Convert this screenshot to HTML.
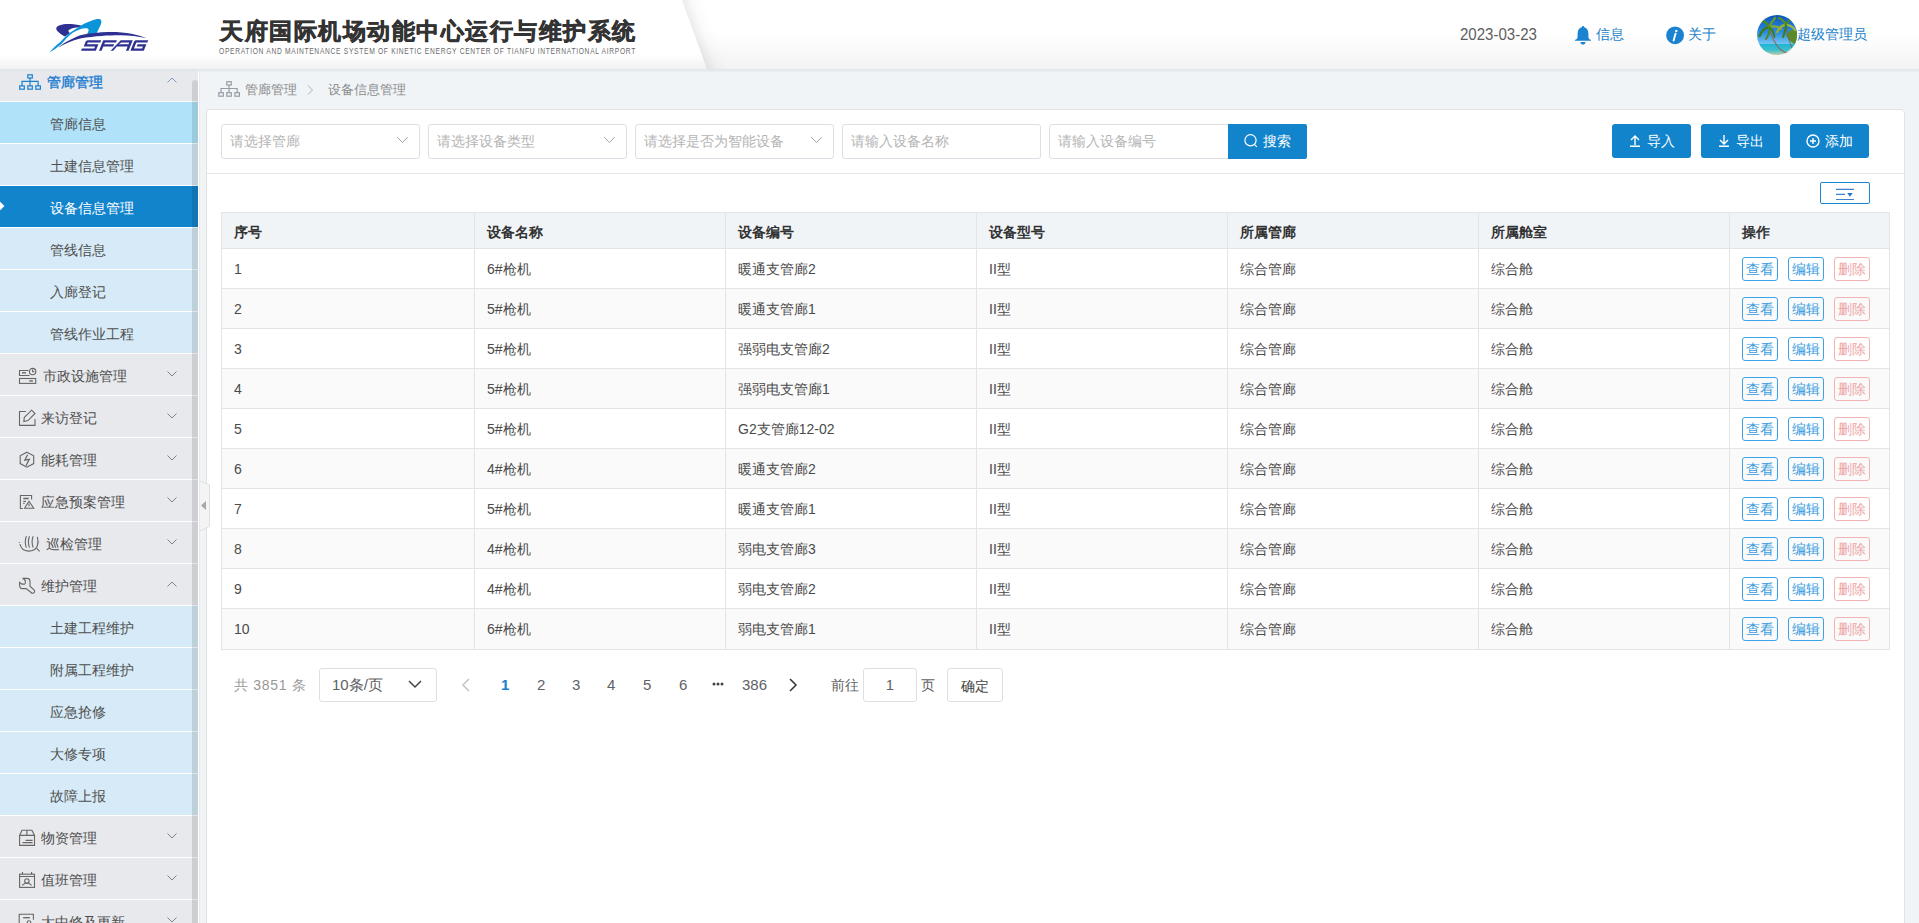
<!DOCTYPE html><html><head><meta charset="utf-8"><title>设备信息管理</title><style>
*{box-sizing:border-box;margin:0;padding:0}
html,body{width:1919px;height:923px;overflow:hidden;background:#f0f4f7;font-family:"Liberation Sans",sans-serif;font-size:14px;color:#606266}
.abs{position:absolute}
.t{position:absolute;white-space:nowrap;line-height:20px}
#hdr{position:absolute;left:0;top:0;width:1919px;height:69px;background:linear-gradient(#fff 0,#fff 33px,#f3f3f3 69px);z-index:5}
#hdrl{position:absolute;left:0;top:0;width:707px;height:69px;background:linear-gradient(#fff 0,#fff 54px,#f2f2f2 69px);clip-path:polygon(0 0,682px 0,707px 69px,0 69px)}
#hshadow{position:absolute;left:0;top:69px;width:1919px;height:4px;background:linear-gradient(#e0e4e9,rgba(240,244,247,0));z-index:4}
#side{position:absolute;left:0;top:60px;width:198px;height:864px;background:#e8e9ed;overflow:hidden}
.mi{position:absolute;left:0;width:198px;height:41px}
.mi.p{background:#e8e9ed}
.mi.s{background:#d6ebf7}
.mi.h{background:#b0e3f9}
.mi.a{background:#1184cc}
.sep{position:absolute;left:0;width:198px;height:1px;background:#fff}
.mt{position:absolute;top:10px;line-height:20px;white-space:nowrap;font-size:14px;color:#4e4e4e}
.mi.a .mt{color:#fff}
.chev{position:absolute;left:167px;width:10px;height:6px}
#sb{position:absolute;left:192px;top:20px;width:6px;height:843px;background:rgba(0,0,0,0.11);border-radius:3px 3px 0 0;z-index:2}
#vline{position:absolute;left:198px;top:69px;width:1px;height:854px;background:#fff;box-shadow:1px 0 0 #e8eaed}
#card{position:absolute;left:206px;top:109px;width:1699px;height:830px;background:#fff;border:1px solid #e2e2e3;border-radius:4px}
.inp{position:absolute;top:124px;height:35px;border:1px solid #dcdfe6;border-radius:3px;background:#fff}
.ph{position:absolute;left:8px;top:6px;line-height:20px;color:#b5b5b5;font-size:14px;white-space:nowrap}
.btn{position:absolute;top:124px;height:34px;background:#1184cc;border-radius:3px;color:#fff}
.tbl{position:absolute;left:221px;top:212px;width:1669px;height:438px;border:1px solid #e4e4e4}
.hl{position:absolute;height:1px;background:#e4e4e4}
.vl{position:absolute;width:1px;background:#e4e4e4}
.cell{position:absolute;line-height:20px;white-space:nowrap;color:#4a4a4a;font-size:14px}
.th{font-weight:bold;color:#333}
.ob{position:absolute;width:36px;height:24px;border:1px solid #3ba3e6;border-radius:3px;color:#3a9be0;font-size:14px;line-height:23px;text-align:center}
.ob.r{border-color:#f3b3b3;color:#efa3a3}
.pg{position:absolute;line-height:20px;white-space:nowrap;color:#606266;font-size:15px}
</style></head><body>
<div id="hdr"><div id="hdrl"></div>
<div class="abs" style="left:682px;top:0;width:22px;height:69px;background:linear-gradient(90deg,rgba(0,0,0,0.075),rgba(0,0,0,0.02) 45%,rgba(0,0,0,0));transform:skewX(19.9deg);transform-origin:0 0"></div>
<svg class="abs" style="left:0;top:0" width="160" height="60" viewBox="0 0 160 60">
<path d="M56.2,28.3 C56.5,25.5 62,23.9 68,23.9 C73,23.9 77.5,24.4 82,25.8 L80,27.2 C75,27.3 71,28.3 68.5,30.3 C68.2,31 69,32.5 70,33 L65,36.5 C61,34.5 56,31 56.2,28.3 Z" fill="#2e3192"/>
<path d="M49.6,52.1 C53,48.5 57,44.5 60.5,41.8 C63,39 66,36 68.9,33.5 C73,30.5 77,28 80.2,25.9 C86,22.7 92,20.2 96,19.3 C98.5,18.8 100.5,18.8 101.1,20.2 C101.7,21.8 101.2,23.5 100.5,25.2 L97.1,32.3 C96.8,33 96.5,33.4 96,33.5 L87.2,34.3 C87.8,32.5 88.6,31 88.6,30.1 C88.6,28.8 87.8,28.4 86.5,28.3 C84,28.3 82,28.6 80.2,29.2 C77,30.3 74,31.8 71.7,33.5 C69,35.5 66,38.5 63.3,42 C59,46.5 53,50.5 49.6,52.1 Z" fill="#0b95d8"/>
<path d="M58.2,47.8 C63,43 72,38.5 80.2,35.2 C90,33.3 100,32.2 108,32.1 C125,31.8 138,34.5 146.5,38.3 C138,36.4 128,35.2 119.5,35.3 C108,35.3 96,36 80.2,38.5 C72,40.5 64,44 58.2,47.8 Z" fill="#2e3192"/>
<g fill="#2e3192" transform="matrix(1,0,-0.4,1,20.32,0)">
<path d="M83.8,40.2H97V42.4H84.4V44.3H95.8V50.8H81V48.6H93.4V46.5H82V41.6Q82.3,40.2 83.8,40.2Z"/>
<path d="M99,40.2H112.7V42.4H101.6V44.3H111.5V46.5H101.6V50.8H99Z"/>
<path d="M116.5,40.2H128.5V50.8H125.9V46.5H115.1L113.2,50.8H110.6L116.5,40.2ZM118,42.4L116,44.3H125.9V42.4Z"/>
<path d="M131.8,40.2H144V42.4H133V48.6H141.2V46.5H135V44.3H143.8V50.8H130.4V41.6Q130.6,40.2 131.8,40.2Z"/>
</g>
</svg>
<div class="t" style="left:220px;top:15px;font-size:23px;line-height:32px;font-weight:bold;color:#333;letter-spacing:1.5px;-webkit-text-stroke:0.6px #333">天府国际机场动能中心运行与维护系统</div>
<div class="t" style="left:219px;top:46px;font-size:8.4px;line-height:10px;color:#6a6a6a;letter-spacing:0.85px;transform:scaleX(0.8);transform-origin:0 0">OPERATION AND MAINTENANCE SYSTEM OF KINETIC ENERGY CENTER OF TIANFU INTERNATIONAL AIRPORT</div>
<div class="t" style="left:1460px;top:25px;font-size:16px;color:#5e5e5e;transform:scaleX(0.94);transform-origin:0 0">2023-03-23</div>
<svg class="abs" style="left:1574px;top:26px" width="18" height="19" viewBox="0 0 18 19"><path d="M9 0 C9.8 0 10.2 0.6 10.2 1.3 C13 2 14.4 4.5 14.4 7.5 L14.4 11 C14.4 12.5 15.6 13.5 17 14 L17 14.8 L1 14.8 L1 14 C2.4 13.5 3.6 12.5 3.6 11 L3.6 7.5 C3.6 4.5 5 2 7.8 1.3 C7.8 0.6 8.2 0 9 0 Z" fill="#1a82d0"/><path d="M6.5 16 H11.5 C11.5 17.5 10.5 18.6 9 18.6 C7.5 18.6 6.5 17.5 6.5 16 Z" fill="#1a82d0"/></svg>
<div class="t" style="left:1596px;top:24px;font-size:14px;color:#1a7fc9">信息</div>
<svg class="abs" style="left:1666px;top:26px" width="18" height="19" viewBox="0 0 18 19"><circle cx="9.1" cy="9.3" r="8.9" fill="#1a82d0"/><circle cx="10.3" cy="5" r="1.2" fill="#fff"/><path d="M9.6 7.6 L7.6 14.6" stroke="#fff" stroke-width="1.9" stroke-linecap="round"/></svg>
<div class="t" style="left:1688px;top:24px;font-size:14px;color:#1a7fc9">关于</div>
<svg class="abs" style="left:1757px;top:15px" width="40" height="40" viewBox="0 0 40 40"><defs><clipPath id="av"><circle cx="20" cy="20" r="20"/></clipPath><linearGradient id="sky" x1="0" y1="0" x2="0" y2="1"><stop offset="0" stop-color="#0b56b8"/><stop offset="0.45" stop-color="#2f8fe0"/><stop offset="0.72" stop-color="#74c4f2"/><stop offset="0.73" stop-color="#1fb5d3"/><stop offset="0.88" stop-color="#3cc0d0"/><stop offset="1" stop-color="#c9c9a6"/></linearGradient></defs>
<g clip-path="url(#av)"><rect width="40" height="40" fill="url(#sky)"/>
<path d="M26 40 L40 28 L40 40 Z" fill="#d8d2b0" opacity="0.8"/>
<path d="M29 20 C31 24,34 28,40 30 L40 14 C36 14,31 16,29 20 Z" fill="#5a8a2a"/>
<path d="M12.8 13 C14 20,17 28,23 34 C25.5 36,28 37.5,30 38" stroke="#8a6e5a" stroke-width="1.2" fill="none"/>
<path d="M29 10 C30 16,31 24,35 33" stroke="#7a6a50" stroke-width="1" fill="none"/>
<g stroke-linecap="round" fill="none">
<path d="M12.8 12.5 C9 12,5 15,2.5 21" stroke="#3e7a1e" stroke-width="2.4"/>
<path d="M12.8 12.5 C10 8,8 6,4 6" stroke="#4d8a22" stroke-width="2.4"/>
<path d="M12.8 12.5 C14 8,16 5,18 3" stroke="#6a9a2a" stroke-width="2.4"/>
<path d="M12.8 12.5 C16 11,20 11,24 14" stroke="#8aa83a" stroke-width="2.2"/>
<path d="M12.8 12.5 C13 17,11 21,9 24" stroke="#4a8a22" stroke-width="2"/>
<path d="M12.8 12.5 C16 15,17 19,17.5 22" stroke="#3e7a1e" stroke-width="1.8"/>
<path d="M29 10 C25 10,22 13,20 17" stroke="#8fb03a" stroke-width="2.4"/>
<path d="M29 10 C27 6,25 4,22 3" stroke="#5a9024" stroke-width="2.2"/>
<path d="M29 10 C31 6,33 4,36 3.5" stroke="#4a8a22" stroke-width="2.2"/>
<path d="M29 10 C33 10,36 12,38 15" stroke="#a0b840" stroke-width="2.2"/>
<path d="M29 10 C29 15,27 19,26 22" stroke="#3e7a1e" stroke-width="2"/>
</g></g></svg>
<div class="t" style="left:1797px;top:24px;font-size:14px;color:#1a7fc9">超级管理员</div>
</div>
<div id="hshadow"></div>
<div id="side">
<div class="mi p" style="top:0px">
<svg class="abs" style="left:16px;top:10px" width="28" height="24" viewBox="0 0 28 24" fill="none" stroke="#1a80d0" stroke-width="1.2"><rect x="11.8" y="4.8" width="4.5" height="3.2"/><rect x="3.7" y="15.9" width="4.6" height="3.3"/><rect x="11.8" y="15.9" width="4.5" height="3.3"/><rect x="19.8" y="15.9" width="4.6" height="3.3"/><path d="M14.05 8V15.9M6 15.9V11.4H22.1V15.9"/></svg>
<div class="mt" style="left:47px;top:12px;color:#1a7cd0;-webkit-text-stroke:0.35px #1a7cd0">管廊管理</div>
<svg class="chev" style="top:17px" viewBox="0 0 10 6"><path d="M0.5 5.5L5 1L9.5 5.5" fill="none" stroke="#7f9cc0" stroke-width="1"/></svg>
</div>
<div class="sep" style="top:41px"></div>
<div class="mi h" style="top:42px">
<div class="mt" style="left:50px;top:12px">管廊信息</div>
</div>
<div class="sep" style="top:83px"></div>
<div class="mi s" style="top:84px">
<div class="mt" style="left:50px;top:12px">土建信息管理</div>
</div>
<div class="sep" style="top:125px"></div>
<div class="mi a" style="top:126px">
<div class="mt" style="left:50px;top:12px">设备信息管理</div>
<div class="abs" style="left:-3.2px;top:17.2px;width:6.4px;height:6.4px;background:#fff;transform:rotate(45deg)"></div>
</div>
<div class="sep" style="top:167px"></div>
<div class="mi s" style="top:168px">
<div class="mt" style="left:50px;top:12px">管线信息</div>
</div>
<div class="sep" style="top:209px"></div>
<div class="mi s" style="top:210px">
<div class="mt" style="left:50px;top:12px">入廊登记</div>
</div>
<div class="sep" style="top:251px"></div>
<div class="mi s" style="top:252px">
<div class="mt" style="left:50px;top:12px">管线作业工程</div>
</div>
<div class="sep" style="top:293px"></div>
<div class="mi p" style="top:294px">
<svg class="abs" style="left:16px;top:10px" width="24" height="24" viewBox="0 0 24 24" fill="none" stroke="#666" stroke-width="1.1"><path d="M12.5 6.5H3.5V11.5H13.5"/><path d="M6 8.8H9.9" stroke-width="1.4"/><circle cx="16.6" cy="7.6" r="3.2"/><path d="M16.6 5.6V7.8H18.4"/><rect x="3.5" y="14.5" width="16.2" height="4.9"/><path d="M13.3 16.9H16.9" stroke-width="1.4"/></svg>
<div class="mt" style="left:43px;top:12px;color:#4e4e4e">市政设施管理</div>
<svg class="chev" style="top:17px" viewBox="0 0 10 6"><path d="M0.5 0.5L5 5L9.5 0.5" fill="none" stroke="#7a8490" stroke-width="1"/></svg>
</div>
<div class="sep" style="top:335px"></div>
<div class="mi p" style="top:336px">
<svg class="abs" style="left:16px;top:10px" width="24" height="24" viewBox="0 0 24 24" fill="none" stroke="#666" stroke-width="1.1"><path d="M9.9 5.5H3.5V19.4H19V13"/><path d="M8.3 11.4L15.6 4.2L19 7.5L12 14.6L7.8 15.6Z"/></svg>
<div class="mt" style="left:41px;top:12px;color:#4e4e4e">来访登记</div>
<svg class="chev" style="top:17px" viewBox="0 0 10 6"><path d="M0.5 0.5L5 5L9.5 0.5" fill="none" stroke="#7a8490" stroke-width="1"/></svg>
</div>
<div class="sep" style="top:377px"></div>
<div class="mi p" style="top:378px">
<svg class="abs" style="left:16px;top:10px" width="24" height="24" viewBox="0 0 24 24" fill="none" stroke="#666" stroke-width="1.1"><path d="M10.9 4.2L17.7 7.8V15.6L10.9 19.2L4.2 15.6V7.8Z"/><path d="M11.6 6.8L8.8 12.2L13.3 11.4L10 17.7" stroke-width="1.2"/></svg>
<div class="mt" style="left:41px;top:12px;color:#4e4e4e">能耗管理</div>
<svg class="chev" style="top:17px" viewBox="0 0 10 6"><path d="M0.5 0.5L5 5L9.5 0.5" fill="none" stroke="#7a8490" stroke-width="1"/></svg>
</div>
<div class="sep" style="top:419px"></div>
<div class="mi p" style="top:420px">
<svg class="abs" style="left:16px;top:10px" width="24" height="24" viewBox="0 0 24 24" fill="none" stroke="#666" stroke-width="1.1"><path d="M15.6 9.6V5.5H4.4V18.5H6.8"/><path d="M7.3 8.5H12.7M7.3 11.3H9.9M7.3 13.4H8.6" stroke-width="1.3"/><path d="M13 11.2L17.7 18.3H8.6Z"/><path d="M13 13.6V16.2"/></svg>
<div class="mt" style="left:41px;top:12px;color:#4e4e4e">应急预案管理</div>
<svg class="chev" style="top:17px" viewBox="0 0 10 6"><path d="M0.5 0.5L5 5L9.5 0.5" fill="none" stroke="#7a8490" stroke-width="1"/></svg>
</div>
<div class="sep" style="top:461px"></div>
<div class="mi p" style="top:462px">
<svg class="abs" style="left:16px;top:10px" width="24" height="24" viewBox="0 0 24 24" fill="none" stroke="#666" stroke-width="1.1"><path d="M3.4 10.1V10.7"/><path d="M3.9 12.2C5 16.5,8.5 19.1,12.5 19.1C16.5 19.1,20 17.5,21.3 14C22.4 11,22.2 7.5,21.3 4.9"/><path d="M20.8 16.4L23.6 19.3"/><path d="M10.4 4.2Q8.2 9.6,10.4 15.6M13.5 4.2Q11.3 9.6,13.5 15.6M17.2 4.2Q15 9.6,17.2 15.6"/></svg>
<div class="mt" style="left:46px;top:12px;color:#4e4e4e">巡检管理</div>
<svg class="chev" style="top:17px" viewBox="0 0 10 6"><path d="M0.5 0.5L5 5L9.5 0.5" fill="none" stroke="#7a8490" stroke-width="1"/></svg>
</div>
<div class="sep" style="top:503px"></div>
<div class="mi p" style="top:504px">
<svg class="abs" style="left:16px;top:10px" width="24" height="24" viewBox="0 0 24 24" fill="none" stroke="#666" stroke-width="1.1"><path d="M6.5 4.4H10.9C12.8 4.4,14 5.6,14 7.3V12.2L18.2 16.1C19 17,18.6 19.2,16.6 19.2C16 19.2,15.5 18.9,15.1 18.5L10.1 14.6H6.5C4.8 14.6,3.6 13,3.6 10.9V8.3L6 10.1H8.6C9.2 10.1,9.4 9.4,9.4 7.8C9.4 6,8 4.8,6.5 4.4Z"/></svg>
<div class="mt" style="left:41px;top:12px;color:#4e4e4e">维护管理</div>
<svg class="chev" style="top:17px" viewBox="0 0 10 6"><path d="M0.5 5.5L5 1L9.5 5.5" fill="none" stroke="#7a8490" stroke-width="1"/></svg>
</div>
<div class="sep" style="top:545px"></div>
<div class="mi s" style="top:546px">
<div class="mt" style="left:50px;top:12px">土建工程维护</div>
</div>
<div class="sep" style="top:587px"></div>
<div class="mi s" style="top:588px">
<div class="mt" style="left:50px;top:12px">附属工程维护</div>
</div>
<div class="sep" style="top:629px"></div>
<div class="mi s" style="top:630px">
<div class="mt" style="left:50px;top:12px">应急抢修</div>
</div>
<div class="sep" style="top:671px"></div>
<div class="mi s" style="top:672px">
<div class="mt" style="left:50px;top:12px">大修专项</div>
</div>
<div class="sep" style="top:713px"></div>
<div class="mi s" style="top:714px">
<div class="mt" style="left:50px;top:12px">故障上报</div>
</div>
<div class="sep" style="top:755px"></div>
<div class="mi p" style="top:756px">
<svg class="abs" style="left:16px;top:10px" width="24" height="24" viewBox="0 0 24 24" fill="none" stroke="#666" stroke-width="1.1"><path d="M6 4.3H15.9L18.5 9.4V19.4H3.6V9.4Z"/><path d="M3.6 9.4H18.5M10.9 4.3V9.4"/><path d="M9.6 14.4H16.6M6.5 16.6H16.6" stroke-width="1.2"/></svg>
<div class="mt" style="left:41px;top:12px;color:#4e4e4e">物资管理</div>
<svg class="chev" style="top:17px" viewBox="0 0 10 6"><path d="M0.5 0.5L5 5L9.5 0.5" fill="none" stroke="#7a8490" stroke-width="1"/></svg>
</div>
<div class="sep" style="top:797px"></div>
<div class="mi p" style="top:798px">
<svg class="abs" style="left:16px;top:10px" width="24" height="24" viewBox="0 0 24 24" fill="none" stroke="#666" stroke-width="1.1"><rect x="3.6" y="6.2" width="14.9" height="13.2"/><path d="M3.6 8.5H18.5M6.5 3.9V6.2M15.6 3.9V6.2"/><circle cx="10.9" cy="12.9" r="2.2"/><path d="M6 17.4L9.1 15.3H13L15.6 17.4"/></svg>
<div class="mt" style="left:41px;top:12px;color:#4e4e4e">值班管理</div>
<svg class="chev" style="top:17px" viewBox="0 0 10 6"><path d="M0.5 0.5L5 5L9.5 0.5" fill="none" stroke="#7a8490" stroke-width="1"/></svg>
</div>
<div class="sep" style="top:839px"></div>
<div class="mi p" style="top:840px">
<svg class="abs" style="left:16px;top:10px" width="24" height="24" viewBox="0 0 24 24" fill="none" stroke="#666" stroke-width="1.1"><path d="M17.4 9.7V4.2H3.2V20"/><path d="M7.1 7.7H13.9" stroke-width="1.3"/><circle cx="13" cy="12.5" r="1.8"/></svg>
<div class="mt" style="left:41px;top:12px;color:#4e4e4e">大中修及更新</div>
<svg class="chev" style="top:17px" viewBox="0 0 10 6"><path d="M0.5 0.5L5 5L9.5 0.5" fill="none" stroke="#7a8490" stroke-width="1"/></svg>
</div>
<div class="sep" style="top:881px"></div>
<div id="sb"></div>
</div>
<div id="vline"></div>
<svg class="abs" style="left:199px;top:480px;z-index:6" width="12" height="52" viewBox="0 0 12 52"><path d="M0 0.5L10.5 5V46.5L0 51.5Z" fill="#f4f4f4" stroke="#dedede" stroke-width="1"/><path d="M2 25.5L7 21V30Z" fill="#a9a9a9"/></svg>
<svg class="abs" style="left:214px;top:76px" width="30" height="24" viewBox="0 0 30 24" fill="none" stroke="#959da6" stroke-width="1.2"><rect x="12.8" y="5.7" width="4.5" height="3.3"/><rect x="4.8" y="16.7" width="4.5" height="3.5"/><rect x="12.8" y="16.7" width="4.5" height="3.5"/><rect x="20.9" y="16.7" width="4.5" height="3.5"/><path d="M15.05 9V16.7M7.05 16.7V12.5H23.15V16.7"/></svg>
<div class="t" style="left:245px;top:80px;font-size:13px;color:#8c8c8c">管廊管理</div>
<svg class="abs" style="left:307px;top:85px" width="7" height="10" viewBox="0 0 7 10"><path d="M1 0.5L5.5 5L1 9.5" fill="none" stroke="#b0b0b0" stroke-width="1"/></svg>
<div class="t" style="left:328px;top:80px;font-size:13px;color:#8c8c8c">设备信息管理</div>
<div id="card"></div>
<div class="hl" style="left:207px;top:173px;width:1697px;background:#e6e6e6"></div>
<div class="inp" style="left:221px;width:199px"><div class="ph">请选择管廊</div><svg class="abs" style="left:174px;top:11px" width="13" height="8" viewBox="0 0 13 8"><path d="M1.2 1.2L6.5 6.5L11.7 1.2" fill="none" stroke="#a0a6b2" stroke-width="1"/></svg></div>
<div class="inp" style="left:428px;width:199px"><div class="ph">请选择设备类型</div><svg class="abs" style="left:174px;top:11px" width="13" height="8" viewBox="0 0 13 8"><path d="M1.2 1.2L6.5 6.5L11.7 1.2" fill="none" stroke="#a0a6b2" stroke-width="1"/></svg></div>
<div class="inp" style="left:635px;width:199px"><div class="ph">请选择是否为智能设备</div><svg class="abs" style="left:174px;top:11px" width="13" height="8" viewBox="0 0 13 8"><path d="M1.2 1.2L6.5 6.5L11.7 1.2" fill="none" stroke="#a0a6b2" stroke-width="1"/></svg></div>
<div class="inp" style="left:842px;width:199px"><div class="ph">请输入设备名称</div></div>
<div class="inp" style="left:1049px;width:180px;border-radius:3px 0 0 3px"><div class="ph">请输入设备编号</div></div>
<div class="btn" style="left:1228px;width:79px;height:35px;border-radius:0 2px 2px 0"><svg class="abs" style="left:14px;top:8px" width="18" height="18" viewBox="0 0 18 18" fill="none" stroke="#fff" stroke-width="1.2"><circle cx="8.5" cy="8.3" r="5.6"/><path d="M12.4 12.4L14.8 14.8"/></svg><div class="t" style="left:35px;top:7px;color:#fff">搜索</div></div>
<div class="btn" style="left:1612px;width:79px"><svg class="abs" style="left:17px;top:10px" width="12" height="13" viewBox="0 0 12 13" fill="none" stroke="#fff" stroke-width="1.4"><path d="M6 11V2M2 6L6 2L10 6M1 12.3H11"/></svg><div class="t" style="left:35px;top:7px;color:#fff">导入</div></div>
<div class="btn" style="left:1701px;width:79px"><svg class="abs" style="left:17px;top:10px" width="12" height="13" viewBox="0 0 12 13" fill="none" stroke="#fff" stroke-width="1.4"><path d="M6 1V10M2 6L6 10L10 6M1 12.3H11"/></svg><div class="t" style="left:35px;top:7px;color:#fff">导出</div></div>
<div class="btn" style="left:1790px;width:79px"><svg class="abs" style="left:16px;top:10px" width="14" height="14" viewBox="0 0 14 14" fill="none" stroke="#fff" stroke-width="1.4"><circle cx="7" cy="7" r="6"/><path d="M7 4V10M4 7H10"/></svg><div class="t" style="left:35px;top:7px;color:#fff">添加</div></div>
<div class="abs" style="left:1820px;top:182px;width:50px;height:22px;border:1px solid #1a86d3;border-radius:2px;background:#fff"><svg class="abs" style="left:15px;top:3px" width="20" height="15" viewBox="0 0 20 15"><path d="M0 3.3H18M0 8.4H9M0 13.5H18" stroke="#3d80cf" stroke-width="1.2"/><path d="M11.2 7H16.7L13.95 10.7Z" fill="#1a78d0"/></svg></div>
<div class="abs" style="left:222px;top:213px;width:1667px;height:35px;background:#f1f4f7"></div>
<div class="abs" style="left:222px;top:289px;width:1667px;height:39px;background:#fafafa"></div>
<div class="abs" style="left:222px;top:369px;width:1667px;height:39px;background:#fafafa"></div>
<div class="abs" style="left:222px;top:449px;width:1667px;height:39px;background:#fafafa"></div>
<div class="abs" style="left:222px;top:529px;width:1667px;height:39px;background:#fafafa"></div>
<div class="abs" style="left:222px;top:609px;width:1667px;height:40px;background:#fafafa"></div>
<div class="tbl"></div>
<div class="hl" style="left:221px;top:248px;width:1669px"></div>
<div class="hl" style="left:221px;top:288px;width:1669px"></div>
<div class="hl" style="left:221px;top:328px;width:1669px"></div>
<div class="hl" style="left:221px;top:368px;width:1669px"></div>
<div class="hl" style="left:221px;top:408px;width:1669px"></div>
<div class="hl" style="left:221px;top:448px;width:1669px"></div>
<div class="hl" style="left:221px;top:488px;width:1669px"></div>
<div class="hl" style="left:221px;top:528px;width:1669px"></div>
<div class="hl" style="left:221px;top:568px;width:1669px"></div>
<div class="hl" style="left:221px;top:608px;width:1669px"></div>
<div class="vl" style="left:474px;top:212px;height:438px"></div>
<div class="vl" style="left:725px;top:212px;height:438px"></div>
<div class="vl" style="left:976px;top:212px;height:438px"></div>
<div class="vl" style="left:1227px;top:212px;height:438px"></div>
<div class="vl" style="left:1478px;top:212px;height:438px"></div>
<div class="vl" style="left:1729px;top:212px;height:438px"></div>
<div class="cell th" style="left:234px;top:222px">序号</div>
<div class="cell th" style="left:487px;top:222px">设备名称</div>
<div class="cell th" style="left:738px;top:222px">设备编号</div>
<div class="cell th" style="left:989px;top:222px">设备型号</div>
<div class="cell th" style="left:1240px;top:222px">所属管廊</div>
<div class="cell th" style="left:1491px;top:222px">所属舱室</div>
<div class="cell th" style="left:1742px;top:222px">操作</div>
<div class="cell" style="left:234px;top:259px">1</div>
<div class="cell" style="left:487px;top:259px">6#枪机</div>
<div class="cell" style="left:738px;top:259px">暖通支管廊2</div>
<div class="cell" style="left:989px;top:259px">II型</div>
<div class="cell" style="left:1240px;top:259px">综合管廊</div>
<div class="cell" style="left:1491px;top:259px">综合舱</div>
<div class="ob" style="left:1742px;top:257px">查看</div>
<div class="ob" style="left:1788px;top:257px">编辑</div>
<div class="ob r" style="left:1834px;top:257px">删除</div>
<div class="cell" style="left:234px;top:299px">2</div>
<div class="cell" style="left:487px;top:299px">5#枪机</div>
<div class="cell" style="left:738px;top:299px">暖通支管廊1</div>
<div class="cell" style="left:989px;top:299px">II型</div>
<div class="cell" style="left:1240px;top:299px">综合管廊</div>
<div class="cell" style="left:1491px;top:299px">综合舱</div>
<div class="ob" style="left:1742px;top:297px">查看</div>
<div class="ob" style="left:1788px;top:297px">编辑</div>
<div class="ob r" style="left:1834px;top:297px">删除</div>
<div class="cell" style="left:234px;top:339px">3</div>
<div class="cell" style="left:487px;top:339px">5#枪机</div>
<div class="cell" style="left:738px;top:339px">强弱电支管廊2</div>
<div class="cell" style="left:989px;top:339px">II型</div>
<div class="cell" style="left:1240px;top:339px">综合管廊</div>
<div class="cell" style="left:1491px;top:339px">综合舱</div>
<div class="ob" style="left:1742px;top:337px">查看</div>
<div class="ob" style="left:1788px;top:337px">编辑</div>
<div class="ob r" style="left:1834px;top:337px">删除</div>
<div class="cell" style="left:234px;top:379px">4</div>
<div class="cell" style="left:487px;top:379px">5#枪机</div>
<div class="cell" style="left:738px;top:379px">强弱电支管廊1</div>
<div class="cell" style="left:989px;top:379px">II型</div>
<div class="cell" style="left:1240px;top:379px">综合管廊</div>
<div class="cell" style="left:1491px;top:379px">综合舱</div>
<div class="ob" style="left:1742px;top:377px">查看</div>
<div class="ob" style="left:1788px;top:377px">编辑</div>
<div class="ob r" style="left:1834px;top:377px">删除</div>
<div class="cell" style="left:234px;top:419px">5</div>
<div class="cell" style="left:487px;top:419px">5#枪机</div>
<div class="cell" style="left:738px;top:419px">G2支管廊12-02</div>
<div class="cell" style="left:989px;top:419px">II型</div>
<div class="cell" style="left:1240px;top:419px">综合管廊</div>
<div class="cell" style="left:1491px;top:419px">综合舱</div>
<div class="ob" style="left:1742px;top:417px">查看</div>
<div class="ob" style="left:1788px;top:417px">编辑</div>
<div class="ob r" style="left:1834px;top:417px">删除</div>
<div class="cell" style="left:234px;top:459px">6</div>
<div class="cell" style="left:487px;top:459px">4#枪机</div>
<div class="cell" style="left:738px;top:459px">暖通支管廊2</div>
<div class="cell" style="left:989px;top:459px">II型</div>
<div class="cell" style="left:1240px;top:459px">综合管廊</div>
<div class="cell" style="left:1491px;top:459px">综合舱</div>
<div class="ob" style="left:1742px;top:457px">查看</div>
<div class="ob" style="left:1788px;top:457px">编辑</div>
<div class="ob r" style="left:1834px;top:457px">删除</div>
<div class="cell" style="left:234px;top:499px">7</div>
<div class="cell" style="left:487px;top:499px">5#枪机</div>
<div class="cell" style="left:738px;top:499px">暖通支管廊1</div>
<div class="cell" style="left:989px;top:499px">II型</div>
<div class="cell" style="left:1240px;top:499px">综合管廊</div>
<div class="cell" style="left:1491px;top:499px">综合舱</div>
<div class="ob" style="left:1742px;top:497px">查看</div>
<div class="ob" style="left:1788px;top:497px">编辑</div>
<div class="ob r" style="left:1834px;top:497px">删除</div>
<div class="cell" style="left:234px;top:539px">8</div>
<div class="cell" style="left:487px;top:539px">4#枪机</div>
<div class="cell" style="left:738px;top:539px">弱电支管廊3</div>
<div class="cell" style="left:989px;top:539px">II型</div>
<div class="cell" style="left:1240px;top:539px">综合管廊</div>
<div class="cell" style="left:1491px;top:539px">综合舱</div>
<div class="ob" style="left:1742px;top:537px">查看</div>
<div class="ob" style="left:1788px;top:537px">编辑</div>
<div class="ob r" style="left:1834px;top:537px">删除</div>
<div class="cell" style="left:234px;top:579px">9</div>
<div class="cell" style="left:487px;top:579px">4#枪机</div>
<div class="cell" style="left:738px;top:579px">弱电支管廊2</div>
<div class="cell" style="left:989px;top:579px">II型</div>
<div class="cell" style="left:1240px;top:579px">综合管廊</div>
<div class="cell" style="left:1491px;top:579px">综合舱</div>
<div class="ob" style="left:1742px;top:577px">查看</div>
<div class="ob" style="left:1788px;top:577px">编辑</div>
<div class="ob r" style="left:1834px;top:577px">删除</div>
<div class="cell" style="left:234px;top:619px">10</div>
<div class="cell" style="left:487px;top:619px">6#枪机</div>
<div class="cell" style="left:738px;top:619px">弱电支管廊1</div>
<div class="cell" style="left:989px;top:619px">II型</div>
<div class="cell" style="left:1240px;top:619px">综合管廊</div>
<div class="cell" style="left:1491px;top:619px">综合舱</div>
<div class="ob" style="left:1742px;top:617px">查看</div>
<div class="ob" style="left:1788px;top:617px">编辑</div>
<div class="ob r" style="left:1834px;top:617px">删除</div>
<div class="pg" style="left:234px;top:675px;font-size:14px;color:#999;letter-spacing:0.7px">共 3851 条</div>
<div class="abs" style="left:319px;top:668px;width:118px;height:34px;border:1px solid #dcdfe6;border-radius:3px"><div class="pg" style="left:12px;top:6px">10条/页</div><svg class="abs" style="left:88px;top:11px" width="14" height="9" viewBox="0 0 14 9"><path d="M1 1L7 7L13 1" fill="none" stroke="#444" stroke-width="1.5"/></svg></div>
<svg class="abs" style="left:461px;top:678px" width="10" height="14" viewBox="0 0 10 14"><path d="M8 1L2 7L8 13" fill="none" stroke="#c0c4cc" stroke-width="1.5"/></svg>
<div class="pg" style="left:501px;top:675px;color:#1a80c9;font-weight:bold">1</div>
<div class="pg" style="left:537px;top:675px;">2</div>
<div class="pg" style="left:572px;top:675px;">3</div>
<div class="pg" style="left:607px;top:675px;">4</div>
<div class="pg" style="left:643px;top:675px;">5</div>
<div class="pg" style="left:679px;top:675px;">6</div>
<svg class="abs" style="left:711px;top:680px" width="14" height="8" viewBox="0 0 14 8"><circle cx="3" cy="4" r="1.5" fill="#444"/><circle cx="7" cy="4" r="1.5" fill="#444"/><circle cx="11" cy="4" r="1.5" fill="#444"/></svg>
<div class="pg" style="left:742px;top:675px">386</div>
<svg class="abs" style="left:788px;top:678px" width="10" height="14" viewBox="0 0 10 14"><path d="M2 1L8 7L2 13" fill="none" stroke="#333" stroke-width="1.5"/></svg>
<div class="pg" style="left:831px;top:675px;font-size:14px">前往</div>
<div class="abs" style="left:863px;top:668px;width:54px;height:34px;border:1px solid #dcdfe6;border-radius:3px"><div class="pg" style="left:0;width:52px;text-align:center;top:6px">1</div></div>
<div class="pg" style="left:921px;top:675px;font-size:14px">页</div>
<div class="abs" style="left:947px;top:668px;width:56px;height:34px;border:1px solid #dcdfe6;border-radius:3px;background:#fff"><div class="pg" style="left:0;width:54px;text-align:center;top:7px;font-size:14px;color:#444">确定</div></div>
</body></html>
